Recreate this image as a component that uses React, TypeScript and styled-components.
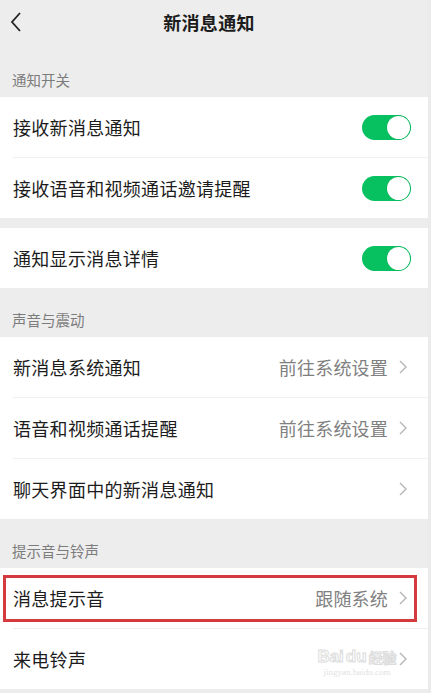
import React from "react";
import styled, { createGlobalStyle } from "styled-components";

const Global = createGlobalStyle`
  html, body { margin: 0; padding: 0; background: #ebebeb; }
  body { font-family: "Noto Sans CJK SC", "Noto Sans", sans-serif; }
  * { box-sizing: border-box; }
`;

const Page = styled.div`
  width: 428px;
  height: 693px;
  background: #ededed;
  display: flex;
  flex-direction: column;
  overflow: hidden;
`;

const Header = styled.header`
  height: 48px;
  display: flex;
  align-items: center;
  justify-content: center;
  padding-right: 10px;
  position: relative;
`;

const BackButton = styled.div`
  position: absolute;
  left: 10px;
  top: 11px;
  width: 16px;
  height: 22px;
  display: flex;
  align-items: center;
`;

const Title = styled.h1`
  margin: 0;
  font-size: 18px;
  font-weight: 600;
  color: #1c1c1c;
  line-height: 24px;
  letter-spacing: 0.3px;
  margin-top: -4px;
`;

const SectionLabel = styled.div`
  padding: 24px 0 9px 12px;
  font-size: 14.5px;
  line-height: 16px;
  color: #7c7c7c;
`;

const Card = styled.section`
  background: #ffffff;
  display: flex;
  flex-direction: column;
  position: relative;
`;

const Gap = styled.div`
  height: 10px;
`;

const Row = styled.div`
  height: 60px;
  display: flex;
  align-items: center;
  padding: 0 17px 0 13px;
  position: relative;
`;

const Label = styled.span`
  flex: 1;
  font-size: 18px;
  color: #1c1c1c;
  letter-spacing: 0.3px;
`;

const Value = styled.span`
  font-size: 18px;
  color: #808080;
  margin-right: 11px;
  letter-spacing: 0.2px;
`;

const ChevronWrap = styled.span`
  width: 8px;
  height: 14px;
  margin-right: 4px;
  display: flex;
`;

const Divider = styled.div`
  height: 1px;
  margin-left: 13px;
  background: #f0f0f0;
`;

const Toggle = styled.div`
  width: 49px;
  height: 25px;
  border-radius: 13px;
  background: #07c160;
  position: relative;
  margin-top: 1px;
`;

const Thumb = styled.div`
  position: absolute;
  right: 1px;
  top: 1px;
  width: 23px;
  height: 23px;
  border-radius: 50%;
  background: #ffffff;
  box-shadow: 0 0 0 0.5px #06ad56;
`;

const Highlight = styled.div`
  position: absolute;
  left: 3px;
  top: 7px;
  width: 414px;
  height: 47px;
  border: 3px solid #d33b3f;
  pointer-events: none;
`;

const Watermark = styled.div`
  position: absolute;
  left: 312px;
  top: 12px;
  width: 90px;
  height: 44px;
  display: flex;
  flex-direction: column;
  align-items: center;
  pointer-events: none;
`;

const MarkMain = styled.div`
  font-family: "Liberation Sans", sans-serif;
  font-size: 17px;
  font-weight: 700;
  line-height: 20px;
  color: transparent;
  -webkit-text-stroke: 1px #dcdcdc;
  display: flex;
  align-items: flex-end;
  gap: 2px;
  margin-top: 6px;
`;

const MarkCJK = styled.span`
  font-family: "Noto Sans CJK SC", sans-serif;
  font-size: 14px;
  -webkit-text-stroke: 1px #dcdcdc;
`;

const MarkSub = styled.div`
  font-family: "Liberation Serif", serif;
  font-size: 9px;
  line-height: 11px;
  color: #e2e2e2;
`;

const Chevron = () => (
  <ChevronWrap>
    <svg width="8" height="14" viewBox="0 0 8 14">
      <polyline points="1,1 7,7 1,13" fill="none" stroke="#b5b5b5" strokeWidth="1.4" />
    </svg>
  </ChevronWrap>
);

const Switch = () => (
  <Toggle>
    <Thumb />
  </Toggle>
);

export default function App() {
  return (
    <>
      <Global />
      <Page>
        <Header>
          <BackButton>
            <svg width="12" height="20" viewBox="0 0 12 20">
              <polyline points="10,1 2,10 10,19" fill="none" stroke="#222" strokeWidth="1.8" />
            </svg>
          </BackButton>
          <Title>新消息通知</Title>
        </Header>

        <SectionLabel>通知开关</SectionLabel>
        <Card>
          <Row>
            <Label>接收新消息通知</Label>
            <Switch />
          </Row>
          <Divider />
          <Row>
            <Label>接收语音和视频通话邀请提醒</Label>
            <Switch />
          </Row>
        </Card>
        <Gap />
        <Card>
          <Row>
            <Label>通知显示消息详情</Label>
            <Switch />
          </Row>
        </Card>

        <SectionLabel>声音与震动</SectionLabel>
        <Card>
          <Row>
            <Label>新消息系统通知</Label>
            <Value>前往系统设置</Value>
            <Chevron />
          </Row>
          <Divider />
          <Row>
            <Label>语音和视频通话提醒</Label>
            <Value>前往系统设置</Value>
            <Chevron />
          </Row>
          <Divider />
          <Row>
            <Label>聊天界面中的新消息通知</Label>
            <Chevron />
          </Row>
        </Card>

        <SectionLabel>提示音与铃声</SectionLabel>
        <Card>
          <Row>
            <Label>消息提示音</Label>
            <Value>跟随系统</Value>
            <Chevron />
            <Highlight />
          </Row>
          <Divider />
          <Row>
            <Label>来电铃声</Label>
            <Chevron />
            <Watermark>
              <MarkMain>
                Bai<span>du</span>
                <MarkCJK>经验</MarkCJK>
              </MarkMain>
              <MarkSub>jingyan.baidu.com</MarkSub>
            </Watermark>
          </Row>
        </Card>
      </Page>
    </>
  );
}
